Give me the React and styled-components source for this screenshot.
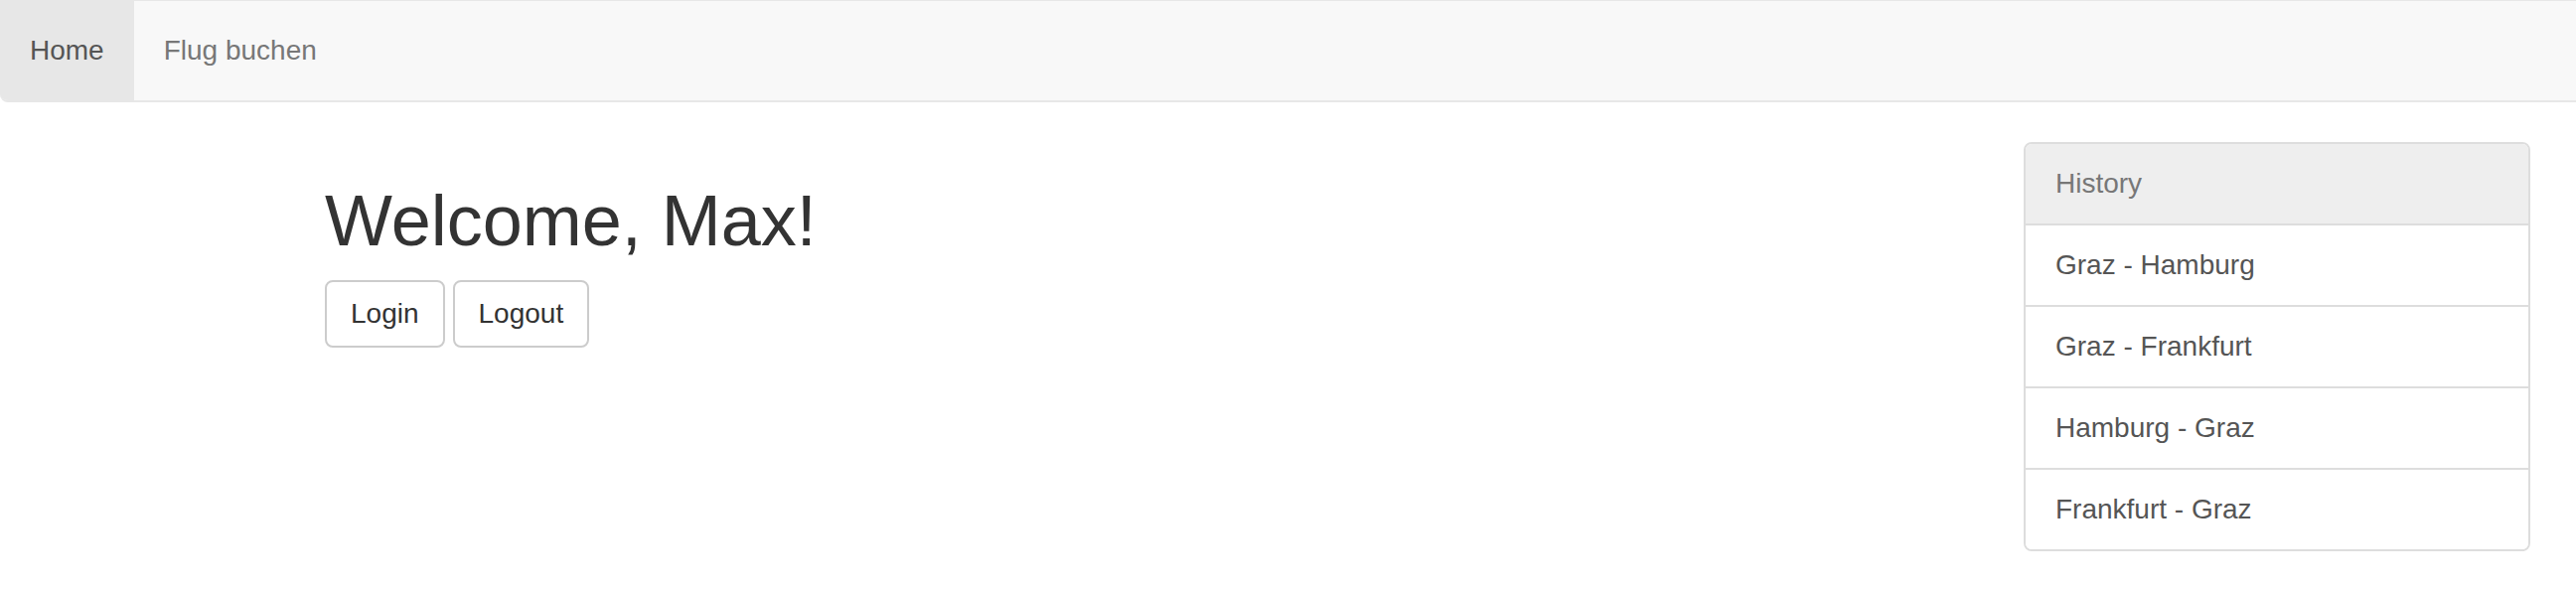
import React from 'react';
import styled, { createGlobalStyle } from 'styled-components';

const GlobalStyle = createGlobalStyle`
  html, body {
    margin: 0;
    padding: 0;
    background: #fff;
  }
  body {
    font-family: "Liberation Sans", Arial, Helvetica, sans-serif;
    font-size: 28px;
    line-height: 40px;
    color: #333;
  }
  * {
    box-sizing: border-box;
  }
`;

const Navbar = styled.nav`
  display: flex;
  height: 103px;
  background: #f8f8f8;
  border-top: 1px solid #e7e7e7;
  border-bottom: 2px solid #e7e7e7;
  border-bottom-left-radius: 8px;
  overflow: hidden;
  margin-bottom: 40px;
`;

const NavLink = styled.a`
  display: block;
  padding: 30px 30px;
  line-height: 40px;
  font-size: 28px;
  text-decoration: none;
  color: ${p => (p.$active ? '#555' : '#777')};
  background: ${p => (p.$active ? '#e7e7e7' : 'transparent')};
  cursor: pointer;
`;

const Layout = styled.div`
  display: flex;
  justify-content: space-between;
  align-items: flex-start;
  padding-left: 327px;
  padding-right: 46px;
`;

const Main = styled.div`
  flex: 1;
`;

const Title = styled.h1`
  margin: 40px 0 20px;
  font-size: 72px;
  line-height: 1.1;
  font-weight: 500;
  color: #333;
`;

const Buttons = styled.div`
  display: flex;
  gap: 8px;
`;

const Button = styled.button`
  font-family: inherit;
  font-size: 28px;
  line-height: 40px;
  padding: 12px 24px;
  height: 68px;
  color: #333;
  background: #fff;
  border: 2px solid #ccc;
  border-radius: 8px;
  cursor: pointer;
`;

const ListGroup = styled.div`
  width: 510px;
  border: 2px solid #ddd;
  border-radius: 8px;
  overflow: hidden;
`;

const ListItem = styled.div`
  padding: 20px 30px;
  line-height: 40px;
  font-size: 28px;
  color: ${p => (p.$disabled ? '#777' : '#555')};
  background: ${p => (p.$disabled ? '#eee' : '#fff')};
  & + & {
    border-top: 2px solid #ddd;
  }
`;

const history = ['Graz - Hamburg', 'Graz - Frankfurt', 'Hamburg - Graz', 'Frankfurt - Graz'];

export default function App() {
  return (
    <>
      <GlobalStyle />
      <Navbar>
        <NavLink $active>Home</NavLink>
        <NavLink>Flug buchen</NavLink>
      </Navbar>
      <Layout>
        <Main>
          <Title>Welcome, Max!</Title>
          <Buttons>
            <Button>Login</Button>
            <Button>Logout</Button>
          </Buttons>
        </Main>
        <ListGroup>
          <ListItem $disabled>History</ListItem>
          {history.map(h => (
            <ListItem key={h}>{h}</ListItem>
          ))}
        </ListGroup>
      </Layout>
    </>
  );
}
